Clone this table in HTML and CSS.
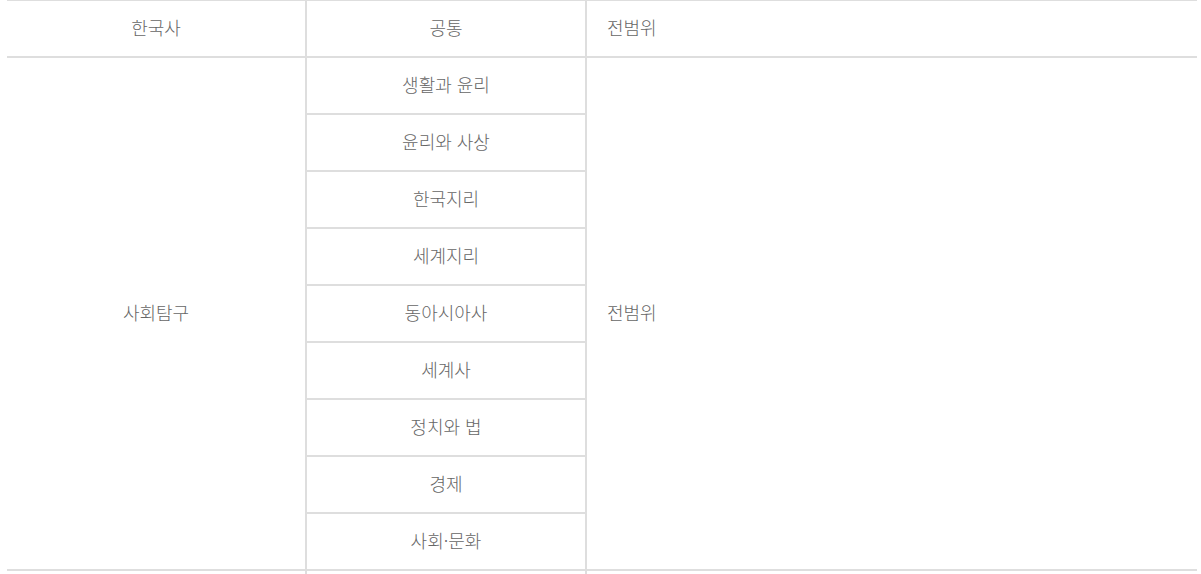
FILE: index.html
```html
<!DOCTYPE html>
<html lang="ko">
<head>
<meta charset="utf-8">
<title>출제범위</title>
<link rel="stylesheet" href="styles.css">
</head>
<body>
<div class="wrap">
<table class="range">
  <colgroup>
    <col class="c1"><col class="c2"><col class="c3">
  </colgroup>
  <tbody>
    <tr class="first">
      <td class="center">한국사</td>
      <td class="center">공통</td>
      <td class="left">전범위</td>
    </tr>
    <tr>
      <td class="center" rowspan="9">사회탐구</td>
      <td class="center">생활과 윤리</td>
      <td class="left" rowspan="9">전범위</td>
    </tr>
    <tr><td class="center">윤리와 사상</td></tr>
    <tr><td class="center">한국지리</td></tr>
    <tr><td class="center">세계지리</td></tr>
    <tr><td class="center">동아시아사</td></tr>
    <tr><td class="center">세계사</td></tr>
    <tr><td class="center">정치와 법</td></tr>
    <tr><td class="center">경제</td></tr>
    <tr><td class="center">사회·문화</td></tr>
    <tr class="next">
      <td></td>
      <td></td>
      <td></td>
    </tr>
  </tbody>
</table>
</div>
</body>
</html>
```

FILE: styles.css
```css
html, body {
  margin: 0;
  padding: 0;
  background: #fff;
  overflow: hidden;
  height: 100%;
}

.wrap {
  padding: 0 4px 0 7px;
}

.range {
  width: 1190px;
  border-collapse: collapse;
  table-layout: fixed;
  font-family: "Noto Sans CJK KR", "Noto Sans", sans-serif;
  font-size: 18px;
  font-weight: 300;
  color: #666;
}

.c1 { width: 299px; }
.c2 { width: 280px; }
.c3 { width: 611px; }

.range td {
  height: 57px;
  padding: 0 20px 3px;
  border: 2px solid #dedede;
  box-sizing: border-box;
  vertical-align: middle;
  line-height: 20px;
}

.range tr.first td {
  height: 56px;
  border-top: 1px solid #dedede;
}
.range tr td:first-child { border-left: 0; }
.range tr td:last-child { border-right: 0; }
.range tr:nth-child(n+3) td:first-child { border-left: 2px solid #dedede; }
.range tr.next td:first-child { border-left: 0; }

.center { text-align: center; }
.left { text-align: left; }
```
